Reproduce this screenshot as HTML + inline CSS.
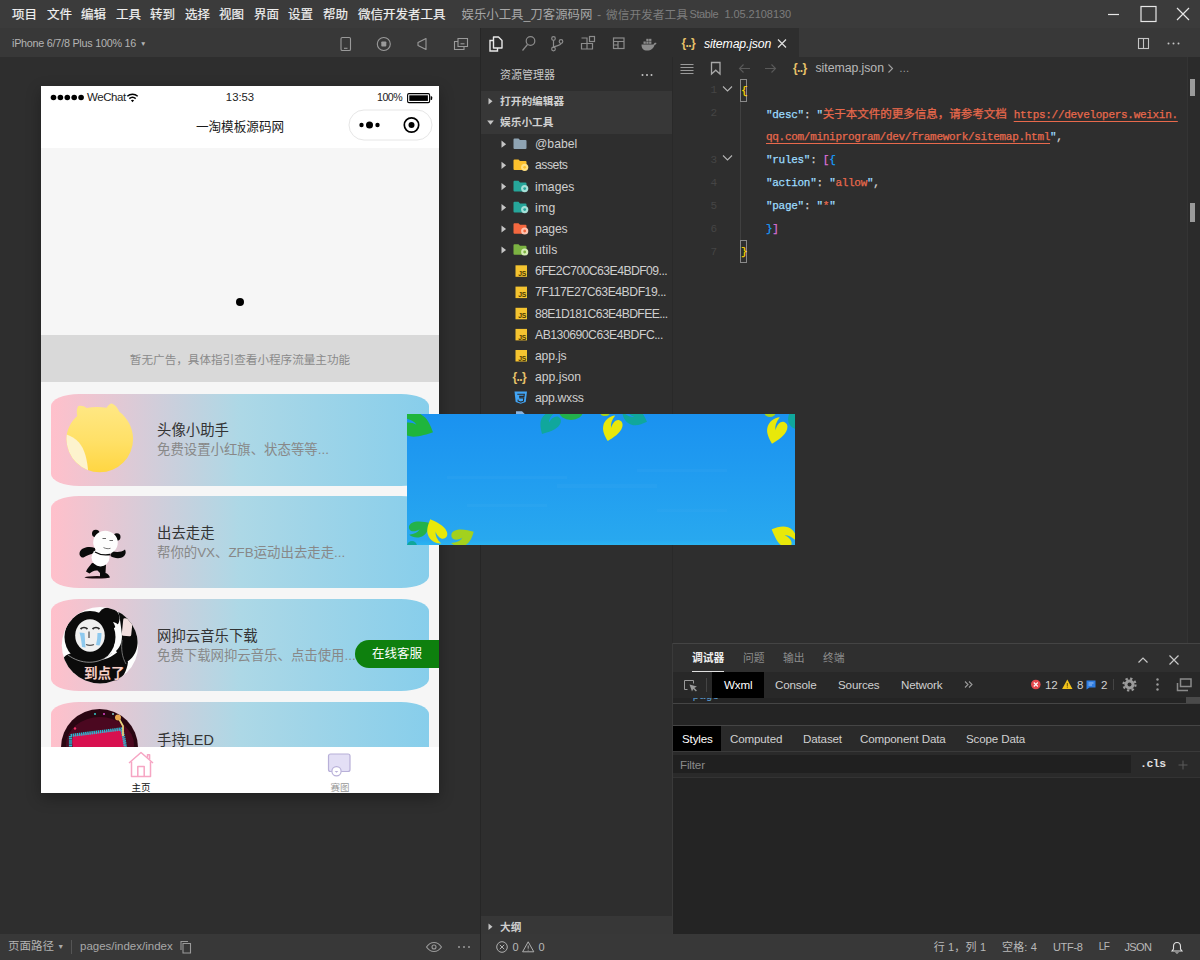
<!DOCTYPE html>
<html lang="zh-CN">
<head>
<meta charset="utf-8">
<title>微信开发者工具</title>
<style>
*{box-sizing:border-box;margin:0;padding:0}
html,body{width:1200px;height:960px;overflow:hidden;background:#2e2e2e}
body{font-family:"Liberation Sans","Noto Sans CJK SC",sans-serif;font-size:12px;color:#ccc;position:relative}
.abs{position:absolute}
.t{position:absolute;white-space:nowrap;line-height:1}
svg{position:absolute;overflow:visible}
/* panels */
#titlebar{left:0;top:0;width:1200px;height:28px;background:#3b3b3b}
#simbar{left:0;top:28px;width:480px;height:29px;background:#383838}
#simarea{left:0;top:57px;width:480px;height:877px;background:#2e2e2e}
#simfoot{left:0;top:934px;width:480px;height:26px;background:#383838}
#vsep{left:480px;top:28px;width:1px;height:932px;background:#262626}
#actbar{left:481px;top:28px;width:191px;height:29px;background:#2e2e2e}
#explorer{left:481px;top:57px;width:191px;height:877px;background:#2e2e2e}
#tabs{left:672px;top:28px;width:528px;height:29px;background:#383838}
#editor{left:672px;top:57px;width:528px;height:586px;background:#2e2e2e}
#debug{left:672px;top:643px;width:528px;height:291px;background:#2b2b2b}
#status{left:481px;top:934px;width:719px;height:26px;background:#383838}
/* phone */
#phone{left:41px;top:86px;width:398px;height:707px;background:#f6f6f6;overflow:hidden;box-shadow:0 5px 14px rgba(0,0,0,.3)}

.mi{top:8.5px;font-size:12.5px;color:#f0f0f0;-webkit-text-stroke:.2px}
.ttl{top:8.5px;font-size:12.5px;color:#7d7d7d}

.card{position:absolute;left:9.6px;width:378.2px;height:92px;border-radius:28px/12px;background:linear-gradient(to right,#ffc0cb,#add8e6,#87ceeb)}
.ct{left:116px;font-size:14.4px;color:#333}
.cs{left:116px;font-size:13.4px;color:#888}

.tr{margin-top:.7px;left:54px;font-size:12.2px;color:#cfcfcf}
.sec{font-size:10.7px;font-weight:bold;color:#d0d0d0}

.lnum{margin-top:1px;left:30px;width:15px;text-align:right;font-family:"Liberation Mono",monospace;font-size:11px;color:#454545}
.code{font-family:"Liberation Mono","Noto Sans CJK SC",monospace;font-size:11px;letter-spacing:-.29px;line-height:13px;margin-top:1px;-webkit-text-stroke:.25px}
.code .cjk{letter-spacing:0;font-size:11.5px}

.dt{font-size:11.6px;color:#d0d0d0;letter-spacing:-.15px}
.sb{top:7.5px;font-size:11px;color:#b8b8b8}

#banner{left:407px;top:414px;width:388px;height:131px;overflow:hidden}
</style>
</head>
<body>
<div id="titlebar" class="abs"><span class="t mi" style="left:12px">项目</span><span class="t mi" style="left:47px">文件</span><span class="t mi" style="left:81px">编辑</span><span class="t mi" style="left:116px">工具</span><span class="t mi" style="left:150px">转到</span><span class="t mi" style="left:185px">选择</span><span class="t mi" style="left:219px">视图</span><span class="t mi" style="left:254px">界面</span><span class="t mi" style="left:288px">设置</span><span class="t mi" style="left:323px">帮助</span><span class="t mi" style="left:358px">微信开发者工具</span><span class="t ttl" style="left:461.5px;color:#a8a8a8;font-size:12.4px">娱乐小工具_刀客源码网</span><span class="t ttl" style="left:597px">-</span><span class="t ttl" style="left:606px;font-size:11.7px">微信开发者工具</span><span class="t ttl" style="left:689.6px;font-size:11px;letter-spacing:-.45px;top:9px">Stable</span><span class="t ttl" style="left:724.4px;font-size:11px;letter-spacing:-.05px;top:9px">1.05.2108130</span><svg style="left:1100px;top:0" width="100" height="28" viewBox="0 0 100 28" fill="none" stroke="#e6e6e6" stroke-width="1.2">
<path d="M8 14.5H19"/><rect x="41" y="6.5" width="15" height="15"/><path d="M77 8L89 20M89 8L77 20"/></svg></div>
<div id="simbar" class="abs"><span class="t" style="left:12px;top:10px;font-size:10.8px;color:#b4b4b4;letter-spacing:-.25px">iPhone 6/7/8 Plus 100% 16<span style="font-size:6.5px;position:relative;top:-1px;margin-left:4px">▼</span></span>
<svg style="left:330px;top:0" width="150" height="29" viewBox="330 28 150 29" fill="none" stroke="#9a9a9a" stroke-width="1.1">
<rect x="341" y="37.5" width="9.5" height="13" rx="1.3"/><path d="M344 48.3h3.5"/>
<circle cx="383.8" cy="44" r="6.5"/><rect x="381.3" y="41.5" width="5" height="5" rx=".8" fill="#9a9a9a" stroke="none"/>
<path d="M418 42.5l8-4v11l-8-4z" stroke-linejoin="round"/>
<path d="M458 38.5h9.5v8h-9.5z"/><path d="M458 41.5h-3.5v8h9.5v-3"/><path d="M460.5 43.8h4"/>
</svg></div>
<div id="simarea" class="abs"></div>
<div id="simfoot" class="abs"><span class="t" style="left:8px;top:7px;font-size:11.5px;color:#b4b4b4">页面路径 <span style="font-size:7px;position:relative;top:-1.5px;color:#aaa">▼</span></span>
<div class="abs" style="left:71px;top:6px;width:1px;height:14px;background:#555"></div>
<span class="t" style="left:80px;top:7px;font-size:11.5px;color:#a8a8a8">pages/index/index</span>
<svg style="left:0;top:0" width="480" height="26" viewBox="0 934 480 26" fill="none" stroke="#9a9a9a" stroke-width="1.1">
<path d="M183 943.5h7.5v9.5h-7.5z"/><path d="M181 950v-8.5h7"/>
<path d="M426.5 947c2-3 4.5-4.5 7.5-4.5s5.5 1.5 7.5 4.5c-2 3-4.5 4.5-7.5 4.5s-5.5-1.5-7.5-4.5z"/><circle cx="434" cy="947" r="2"/>
<g fill="#9a9a9a" stroke="none"><circle cx="459" cy="947" r="1"/><circle cx="464" cy="947" r="1"/><circle cx="469" cy="947" r="1"/></g>
</svg></div>
<div id="actbar" class="abs"><svg style="left:0;top:0" width="191" height="29" viewBox="481 28 191 29" fill="none" stroke="#8c8c8c" stroke-width="1.2">
<g stroke="#e8e8e8" stroke-width="1.4"><path d="M493.5 37h5l3.5 3.5v7.5h-8.5z" stroke-linejoin="round"/><path d="M493.5 40.5h-3.5v10.5h7.5v-3"/></g>
<circle cx="530.5" cy="41" r="4.3"/><path d="M527.5 44.5l-5 6"/>
<circle cx="553.5" cy="38.5" r="1.8"/><circle cx="553.5" cy="49" r="1.8"/><circle cx="561" cy="41.5" r="1.8"/><path d="M553.5 40.3v7M561 43.3c0 3-7.5 2-7.5 4.5"/>
<path d="M581.5 43.5h5.5v5.5h-5.5zM587 43.5h5.5v5.5h-5.5z"/><path d="M581.5 38h5.5v5.5"/><rect x="589.5" y="36.5" width="5" height="5"/>
<rect x="613.5" y="38" width="10.5" height="10.5"/><path d="M613.5 41.5h10.5M618 41.5v3.5h-4.5M618 45v3.5"/>
<g fill="#8c8c8c" stroke="none"><path d="M641.5 44.5h12c.5-1.5 1.5-2 3-1.5c-.3 1-.8 1.8-2 2c-.8 3.5-3.5 5.5-7.5 5.5c-3.5 0-5.5-2-5.5-6z"/><rect x="643.5" y="41.5" width="2.3" height="2.3"/><rect x="646.3" y="41.5" width="2.3" height="2.3"/><rect x="649.1" y="41.5" width="2.3" height="2.3"/><rect x="646.3" y="38.8" width="2.3" height="2.3"/><rect x="649.1" y="38.8" width="2.3" height="2.3"/></g>
</svg></div>
<div id="explorer" class="abs"><div class="abs" style="left:0;top:34px;width:191px;height:43px;background:#373737"></div>
<div class="abs" style="left:0;top:859px;width:191px;height:18px;background:#373737"></div>
<svg style="left:0;top:0" width="191" height="877" viewBox="481 57 191 877"><path d="M501.5 140.6l4.6 3.6l-4.6 3.6z" fill="#c5c5c5"/><path d="M513.5 139.39999999999998a1 1 0 0 1 1-1h4l1.5 1.6h5.5a1 1 0 0 1 1 1v7a1 1 0 0 1-1 1h-11a1 1 0 0 1-1-1z" fill="#8fa4b3"/><path d="M501.5 161.70000000000002l4.6 3.6l-4.6 3.6z" fill="#c5c5c5"/><path d="M513.5 160.5a1 1 0 0 1 1-1h4l1.5 1.6h5.5a1 1 0 0 1 1 1v7a1 1 0 0 1-1 1h-11a1 1 0 0 1-1-1z" fill="#fbc02d"/><circle cx="524.7" cy="167.3" r="3.6" fill="#ffe082"/><circle cx="524.7" cy="167.3" r="1.4" fill="#fbc02d"/><path d="M501.5 183.0l4.6 3.6l-4.6 3.6z" fill="#c5c5c5"/><path d="M513.5 181.79999999999998a1 1 0 0 1 1-1h4l1.5 1.6h5.5a1 1 0 0 1 1 1v7a1 1 0 0 1-1 1h-11a1 1 0 0 1-1-1z" fill="#26a69a"/><circle cx="524.7" cy="188.6" r="3.6" fill="#a5e0d8"/><circle cx="524.7" cy="188.6" r="1.4" fill="#26a69a"/><path d="M501.5 204.0l4.6 3.6l-4.6 3.6z" fill="#c5c5c5"/><path d="M513.5 202.79999999999998a1 1 0 0 1 1-1h4l1.5 1.6h5.5a1 1 0 0 1 1 1v7a1 1 0 0 1-1 1h-11a1 1 0 0 1-1-1z" fill="#26a69a"/><circle cx="524.7" cy="209.6" r="3.6" fill="#a5e0d8"/><circle cx="524.7" cy="209.6" r="1.4" fill="#26a69a"/><path d="M501.5 225.4l4.6 3.6l-4.6 3.6z" fill="#c5c5c5"/><path d="M513.5 224.2a1 1 0 0 1 1-1h4l1.5 1.6h5.5a1 1 0 0 1 1 1v7a1 1 0 0 1-1 1h-11a1 1 0 0 1-1-1z" fill="#f4683f"/><circle cx="524.7" cy="231" r="3.6" fill="#ffc4b0"/><circle cx="524.7" cy="231" r="1.4" fill="#f4683f"/><path d="M501.5 246.4l4.6 3.6l-4.6 3.6z" fill="#c5c5c5"/><path d="M513.5 245.2a1 1 0 0 1 1-1h4l1.5 1.6h5.5a1 1 0 0 1 1 1v7a1 1 0 0 1-1 1h-11a1 1 0 0 1-1-1z" fill="#7cb342"/><circle cx="524.7" cy="252" r="3.6" fill="#d4ecb4"/><circle cx="524.7" cy="252" r="1.4" fill="#7cb342"/><rect x="515.5" y="265.3" width="11.5" height="11.5" fill="#f4c430"/><text x="518.2" y="275.9" font-size="6.8" font-weight="bold" fill="#4a3800" font-family="Liberation Sans,sans-serif" letter-spacing="-.3">JS</text><rect x="515.5" y="286.6" width="11.5" height="11.5" fill="#f4c430"/><text x="518.2" y="297.2" font-size="6.8" font-weight="bold" fill="#4a3800" font-family="Liberation Sans,sans-serif" letter-spacing="-.3">JS</text><rect x="515.5" y="307.8" width="11.5" height="11.5" fill="#f4c430"/><text x="518.2" y="318.4" font-size="6.8" font-weight="bold" fill="#4a3800" font-family="Liberation Sans,sans-serif" letter-spacing="-.3">JS</text><rect x="515.5" y="328.90000000000003" width="11.5" height="11.5" fill="#f4c430"/><text x="518.2" y="339.5" font-size="6.8" font-weight="bold" fill="#4a3800" font-family="Liberation Sans,sans-serif" letter-spacing="-.3">JS</text><rect x="515.5" y="350.0" width="11.5" height="11.5" fill="#f4c430"/><text x="518.2" y="360.6" font-size="6.8" font-weight="bold" fill="#4a3800" font-family="Liberation Sans,sans-serif" letter-spacing="-.3">JS</text><text x="512.5" y="381" font-size="12" font-weight="bold" fill="#e8c36a" font-family="Liberation Sans,sans-serif" letter-spacing="-.6">{..}</text><path d="M514.5 391.5h12.5l-1.3 10.5l-5 1.8l-5-1.8z" fill="#42a5f5"/><path d="M517.3 394.2h7l-.3 2.2h-4.3l.2 1.5h3.900l-.4 3.3l-2.600 .9l-2.600-.9l-.2-1.600" fill="none" stroke="#2b2b2b" stroke-width="1.1"/><path d="M516 411.3h6l2.5 2.5v4h-8.5z" fill="#8ab4e0"/><g fill="#c5c5c5"><circle cx="642.5" cy="75" r="1"/><circle cx="647" cy="75" r="1"/><circle cx="651.5" cy="75" r="1"/></g><path d="M488.5 98l4 3.2l-4 3.2z" fill="#c5c5c5"/><path d="M487.2 120.5h6.600l-3.300 4.2z" fill="#c5c5c5"/><path d="M488.5 923.5l4 3.2l-4 3.2z" fill="#c5c5c5"/></svg>
<span class="t" style="left:19px;top:12.5px;font-size:11px;color:#c8c8c8">资源管理器</span>
<span class="t sec" style="left:19px;top:39px">打开的编辑器</span>
<span class="t sec" style="left:19px;top:60px">娱乐小工具</span>
<span class="t sec" style="left:19px;top:864.5px">大纲</span>
<span class="t tr" style="top:80.7px">@babel</span><span class="t tr" style="top:101.8px;letter-spacing:-0.46px">assets</span><span class="t tr" style="top:123.1px">images</span><span class="t tr" style="top:144.1px;letter-spacing:0.29px">img</span><span class="t tr" style="top:165.5px;letter-spacing:-0.14px">pages</span><span class="t tr" style="top:186.5px;letter-spacing:0.16px">utils</span><span class="t tr" style="top:207.5px;letter-spacing:-0.55px">6FE2C700C63E4BDF09...</span><span class="t tr" style="top:228.8px;letter-spacing:-0.46px">7F117E27C63E4BDF19...</span><span class="t tr" style="top:250.0px;letter-spacing:-0.63px">88E1D181C63E4BDFEE...</span><span class="t tr" style="top:271.1px;letter-spacing:-0.48px">AB130690C63E4BDFC...</span><span class="t tr" style="top:292.2px;letter-spacing:-0.17px">app.js</span><span class="t tr" style="top:313.5px">app.json</span><span class="t tr" style="top:334.5px;letter-spacing:-0.29px">app.wxss</span></div>
<div id="tabs" class="abs"><div class="abs" style="left:0;top:0;width:127px;height:29px;background:#2e2e2e"></div>
<span class="t" style="left:9.5px;top:9px;font-size:12px;font-weight:bold;color:#e8c36a;letter-spacing:-.6px">{..}</span>
<span class="t" style="left:32px;top:9.5px;font-size:12.3px;font-style:italic;color:#fff;letter-spacing:-.15px">sitemap.json</span>
<svg style="left:0;top:0" width="528" height="29" viewBox="672 28 528 29" fill="none" stroke="#e0e0e0" stroke-width="1.2">
<path d="M778 39.5l8 8M786 39.5l-8 8"/>
<g stroke="#c5c5c5" stroke-width="1.1"><rect x="1138.5" y="38.5" width="10" height="10"/><path d="M1143.5 38.5v10"/></g>
<g fill="#c5c5c5" stroke="none"><circle cx="1168.5" cy="43.5" r="1"/><circle cx="1173.5" cy="43.5" r="1"/><circle cx="1178.5" cy="43.5" r="1"/></g>
</svg></div>
<div id="editor" class="abs"><svg style="left:0;top:0" width="528" height="586" viewBox="672 57 528 586" fill="none" stroke="#c5c5c5" stroke-width="1.1">
<path d="M680.5 64.5h13M680.5 67.5h13M680.5 70.5h13M680.5 73.5h13" stroke-width="1" stroke="#9a9a9a"/>
<path d="M711.5 62.5h8.5v11.5l-4.250-3.800l-4.250 3.800z" stroke-width="1.3" stroke="#a8a8a8"/>
<g stroke="#5a5a5a"><path d="M750 68.5h-10.5M743.5 64.5l-4 4l4 4"/><path d="M765 68.5h10.5M771.5 64.5l4 4l-4 4"/></g>
<path d="M888.5 64.5l4 4l-4 4" stroke="#a0a0a0"/>
<g stroke="#b4b4b4" stroke-width="1.1"><path d="M723 86.5l4.5 4.5l4.5-4.5"/><path d="M723 155.5l4.5 4.5l4.5-4.5"/></g>
<rect x="740.5" y="79.5" width="6" height="22" stroke="#8a8a8a" stroke-width="1"/><rect x="740.5" y="240.5" width="6" height="22" stroke="#8a8a8a" stroke-width="1"/>
<path d="M740.5 102v138" stroke="#404040" stroke-width="1"/>
</svg>
<div class="abs" style="left:515px;top:0;width:13px;height:586px;background:#2b2b2b;border-left:1px solid #343434"></div>
<div class="abs" style="left:518px;top:22px;width:5px;height:17px;background:#9a9a9a"></div>
<div class="abs" style="left:518px;top:146px;width:5px;height:19px;background:#9a9a9a"></div>
<span class="t" style="left:121px;top:4.5px;font-size:12px;font-weight:bold;color:#e8c36a;letter-spacing:-.6px">{..}</span>
<span class="t" style="left:143.5px;top:5px;font-size:12.3px;color:#b8b8b8;letter-spacing:-.05px">sitemap.json</span>
<span class="t" style="left:227px;top:5.5px;font-size:10.5px;color:#a0a0a0;letter-spacing:-1px">…</span>
<span class="t lnum" style="top:27px">1</span><span class="t lnum" style="top:50px">2</span><span class="t lnum" style="top:96.5px">3</span><span class="t lnum" style="top:119.5px">4</span><span class="t lnum" style="top:142.5px">5</span><span class="t lnum" style="top:165.5px">6</span><span class="t lnum" style="top:188.5px">7</span><span class="t code" style="left:69px;top:26.5px"><span style="color:#ffd700">{</span></span><span class="t code" style="left:94px;top:49.5px"><span style="color:#9cdcfe">"desc"</span><span style="color:#d4d4d4">: </span><span style="color:#9cdcfe">"</span><span style="color:#e8694c" class="cjk">关于本文件的更多信息，请参考文档 </span><span style="color:#e8694c;text-decoration:underline;text-underline-offset:3px">https://developers.weixin.</span></span><span class="t code" style="left:94px;top:73.0px"><span style="color:#e8694c;text-decoration:underline;text-underline-offset:3px">qq.com/miniprogram/dev/framework/sitemap.html</span><span style="color:#9cdcfe">"</span><span style="color:#d4d4d4">,</span></span><span class="t code" style="left:94px;top:96.0px"><span style="color:#9cdcfe">"rules"</span><span style="color:#d4d4d4">: </span><span style="color:#da70d6">[</span><span style="color:#179fff">{</span></span><span class="t code" style="left:94px;top:119.0px"><span style="color:#9cdcfe">"action"</span><span style="color:#d4d4d4">: </span><span style="color:#9cdcfe">"</span><span style="color:#e8694c">allow</span><span style="color:#9cdcfe">"</span><span style="color:#d4d4d4">,</span></span><span class="t code" style="left:94px;top:142.0px"><span style="color:#9cdcfe">"page"</span><span style="color:#d4d4d4">: </span><span style="color:#9cdcfe">"</span><span style="color:#e8694c">*</span><span style="color:#9cdcfe">"</span></span><span class="t code" style="left:94px;top:165.0px"><span style="color:#179fff">}</span><span style="color:#da70d6">]</span></span><span class="t code" style="left:69px;top:188.0px"><span style="color:#ffd700">}</span></span></div>
<div id="debug" class="abs"><div class="abs" style="left:0;top:0;width:528px;height:1px;background:#444"></div>
<div class="abs" style="left:0;top:1px;width:528px;height:28px;background:#2f2f2f"></div>
<div class="abs" style="left:0;top:29px;width:528px;height:26px;background:#282828"></div>
<div class="abs" style="left:0;top:55px;width:528px;height:236px;background:#242424"></div>
<div class="abs" style="left:0;top:60px;width:528px;height:1px;background:#454545"></div>
<div class="abs" style="left:0;top:82px;width:528px;height:1px;background:#454545"></div>
<div class="abs" style="left:0;top:83px;width:528px;height:25px;background:#2a2a2a"></div>
<div class="abs" style="left:0;top:108px;width:528px;height:1px;background:#3a3a3a"></div>
<div class="abs" style="left:0;top:109px;width:528px;height:25px;background:#2a2a2a"></div>
<div class="abs" style="left:0;top:112px;width:459px;height:18px;background:#202020"></div>
<div class="abs" style="left:0;top:134px;width:528px;height:1px;background:#333"></div>
<div class="abs" style="left:0;top:0;width:1px;height:291px;background:#3a3a3a"></div>
<div class="abs" style="left:40px;top:29px;width:52px;height:26px;background:#000"></div>
<div class="abs" style="left:1px;top:83px;width:48px;height:25px;background:#000"></div>
<div class="abs" style="left:20px;top:28px;width:32px;height:1px;background:#e0e0e0"></div>
<div class="abs" style="left:514px;top:54px;width:14px;height:6px;background:#4a4a4a"></div>
<span class="t" style="left:20px;top:10px;font-size:10.8px;font-weight:bold;color:#eee">调试器</span>
<span class="t" style="left:71px;top:10px;font-size:10.8px;color:#8c8c8c">问题</span>
<span class="t" style="left:111px;top:10px;font-size:10.8px;color:#8c8c8c">输出</span>
<span class="t" style="left:151px;top:10px;font-size:10.8px;color:#8c8c8c">终端</span>
<span class="t dt" style="left:52px;top:36px;color:#fff">Wxml</span>
<span class="t dt" style="left:103px;top:36px">Console</span>
<span class="t dt" style="left:166px;top:36px">Sources</span>
<span class="t dt" style="left:229px;top:36px">Network</span>
<span class="t dt" style="left:373px;top:36px">12</span>
<span class="t dt" style="left:405px;top:36px">8</span>
<span class="t dt" style="left:429px;top:36px">2</span>
<span class="t dt" style="left:10px;top:90px;color:#fff">Styles</span>
<span class="t dt" style="left:58px;top:90px">Computed</span>
<span class="t dt" style="left:131px;top:90px">Dataset</span>
<span class="t dt" style="left:188px;top:90px">Component Data</span>
<span class="t dt" style="left:294px;top:90px">Scope Data</span>
<span class="t dt" style="left:8px;top:116px;color:#8a8a8a">Filter</span>
<span class="t" style="left:468px;top:115px;font-size:11.5px;font-weight:bold;color:#e0e0e0;font-family:'Liberation Mono',monospace;letter-spacing:-.5px">.cls</span>
<div class="abs" style="left:14px;top:55px;width:60px;height:5px;overflow:hidden"><span class="t" style="left:0;top:-7px;font-size:11px;color:#5b9bd0;font-family:'Liberation Mono',monospace">&lt;page&gt;</span></div>
<svg style="left:0;top:0" width="528" height="291" viewBox="672 643 528 291" fill="none" stroke="#c8c8c8" stroke-width="1.2">
<path d="M1138.5 662.5l4.5-4.5l4.5 4.5"/><path d="M1169.5 655.5l9 9M1178.5 655.5l-9 9"/>
<g stroke="#9a9a9a" stroke-width="1"><path d="M684.5 680.5h9v3M684.5 680.5v9h3"/><path d="M689.5 684.5l2.5 7l1.3-2.600l2.600 2.600l1-1l-2.600-2.600l2.600-1.3z" fill="#9a9a9a" stroke="none"/></g>
<path d="M706.5 678v14" stroke="#444" stroke-width="1"/>
<g stroke="#9a9a9a" stroke-width="1.1"><path d="M965 681.5l3 3l-3 3M969 681.5l3 3l-3 3"/></g>
<circle cx="1035.8" cy="684.5" r="4.8" fill="#e5484d" stroke="none"/><path d="M1033.8 682.5l4 4M1037.8 682.5l-4 4" stroke="#fff" stroke-width="1.1"/>
<path d="M1067.3 679.5l5.2 9.5h-10.400z" fill="#f1c21b" stroke="none"/><path d="M1067.3 683v3.5M1067.3 687.3v.8" stroke="#6b5200" stroke-width="1"/>
<path d="M1086.5 680.5h9v7h-6l-3 2z" fill="#2f7de1" stroke="none"/><path d="M1088.5 683h5M1088.5 685h3.5" stroke="#cfe3ff" stroke-width=".7"/>
<path d="M1113.5 679v11" stroke="#444" stroke-width="1"/>
<g fill="#9a9a9a" stroke="none"><circle cx="1129.5" cy="684.5" r="5"/><circle cx="1157.5" cy="679.5" r="1.2"/><circle cx="1157.5" cy="684.5" r="1.2"/><circle cx="1157.5" cy="689.5" r="1.2"/></g>
<circle cx="1129.5" cy="684.5" r="6" stroke="#9a9a9a" stroke-width="2.2" stroke-dasharray="2.3 2.400"/><circle cx="1129.5" cy="684.5" r="2" fill="#282828" stroke="none"/>
<g stroke="#8a8a8a" stroke-width="1.5"><rect x="1180.5" y="679" width="10.5" height="7.5"/><path d="M1177.5 683v7.5h10.5"/></g>
<path d="M1183 760.5v9M1178.5 765h9" stroke="#5a5a5a" stroke-width="1"/>
</svg></div>
<div id="status" class="abs"><svg style="left:0;top:0" width="719" height="26" viewBox="481 934 719 26" fill="none" stroke="#b0b0b0" stroke-width="1">
<circle cx="502" cy="947" r="5.3"/><path d="M499.8 944.8l4.4 4.4M504.2 944.8l-4.4 4.4"/>
<path d="M528.2 941.8l5.6 10h-11.2z"/><path d="M528.2 945.5v3.2M528.2 949.8v.7"/>
<path d="M1177 942.5c-2.5 0-3.5 2-3.5 4v2.5l-1.5 2h10l-1.5-2v-2.5c0-2-1-4-3.5-4z" stroke="#e0e0e0" stroke-width="1.1"/><path d="M1175.8 952.3c.3 1.200 2.1 1.200 2.400 0" stroke="#e0e0e0"/>
</svg>
<span class="t sb" style="left:31.4px;letter-spacing:-.4px">0</span><span class="t sb" style="left:57.4px;letter-spacing:-.4px">0</span>
<span class="t sb" style="left:452.7px;letter-spacing:.16px">行 1，列 1</span>
<span class="t sb" style="left:521px;letter-spacing:.15px">空格: 4</span>
<span class="t sb" style="left:572px;letter-spacing:-.33px">UTF-8</span>
<span class="t sb" style="left:617.7px;font-size:10px;letter-spacing:-.4px">LF</span>
<span class="t sb" style="left:643.5px;letter-spacing:-.65px">JSON</span></div>
<div id="vsep" class="abs"></div><div class="abs" style="left:672px;top:57px;width:1px;height:586px;background:#292929"></div>
<div id="phone" class="abs">
<div class="abs" style="left:0;top:0;width:398px;height:62px;background:#fff"></div>
<svg style="left:0;top:0" width="398" height="62" viewBox="0 0 398 62">
<g fill="#000"><circle cx="12.5" cy="11.5" r="2.8"/><circle cx="19.4" cy="11.5" r="2.8"/><circle cx="26.3" cy="11.5" r="2.8"/><circle cx="33.2" cy="11.5" r="2.8"/><circle cx="40.1" cy="11.5" r="2.8"/></g>
<g fill="none" stroke="#000" stroke-width="1.5" stroke-linecap="butt"><path d="M86.3 10.2a8 8 0 0 1 10.4 0"/><path d="M88.3 12.6a5 5 0 0 1 6.4 0"/></g><path d="M89.9 14.3a2.6 2.6 0 0 1 3.2 0L91.5 16.2z" fill="#000"/>
<rect x="366.6" y="7.6" width="22" height="9" rx="1.3" fill="none" stroke="#000" stroke-width="1.1"/><rect x="368.3" y="9.3" width="18.6" height="5.6" fill="#000"/><path d="M389.6 10.3h.6a1 1 0 0 1 1 1v1.6a1 1 0 0 1-1 1h-.6z" fill="#000"/>
<rect x="308" y="24" width="83" height="30" rx="15" fill="#fff" stroke="#e6e6e6" stroke-width="1"/>
<g fill="#000"><circle cx="320.5" cy="39" r="2.2"/><circle cx="328.5" cy="39" r="3.5"/><circle cx="336.5" cy="39" r="2.2"/><circle cx="370.5" cy="39" r="3"/></g>
<circle cx="370.5" cy="39" r="7.2" fill="none" stroke="#000" stroke-width="1.7"/>
</svg>
<span class="t" style="left:46px;top:5.6px;font-size:11.5px;color:#222;letter-spacing:-.45px">WeChat</span>
<span class="t" style="left:169px;width:60px;text-align:center;top:5.5px;font-size:11.3px;color:#222">13:53</span>
<span class="t" style="left:336px;top:6px;font-size:10.6px;color:#222;letter-spacing:-.5px">100%</span>
<span class="t" style="left:99px;width:200px;text-align:center;top:35px;font-size:12.6px;color:#1a1a1a">一淘模板源码网</span>
<div class="abs" style="left:0;top:62px;width:398px;height:187px;background:#f6f6f6"></div>
<div class="abs" style="left:195px;top:212px;width:8px;height:8px;border-radius:50%;background:#000"></div>
<div class="abs" style="left:0;top:249px;width:398px;height:47px;background:#d9d9d9"></div>
<span class="t" style="left:0;width:398px;text-align:center;top:268px;font-size:11.6px;color:#8a8a8a">暂无广告，具体指引查看小程序流量主功能</span>

<div class="card" style="top:308px"></div>
<div class="card" style="top:410px"></div>
<div class="card" style="top:513px"></div>
<div class="card" style="top:616px"></div>
<span class="t ct" style="top:337px">头像小助手</span>
<span class="t cs" style="top:357px">免费设置小红旗、状态等等...</span>
<span class="t ct" style="top:440px">出去走走</span>
<span class="t cs" style="top:460px">帮你的VX、ZFB运动出去走走...</span>
<span class="t ct" style="top:543px">网抑云音乐下载</span>
<span class="t cs" style="top:563px">免费下载网抑云音乐、点击使用...</span>
<span class="t ct" style="top:647px">手持LED</span>

<svg style="left:0;top:0" width="398" height="707" viewBox="41 86 398 707">
<defs>
<linearGradient id="yg" x1="0" y1="0" x2="0" y2="1"><stop offset="0" stop-color="#ffe98a"/><stop offset=".55" stop-color="#ffe066"/><stop offset="1" stop-color="#ffd43b"/></linearGradient>
<clipPath id="c1"><path d="M66.5 439a33.3 33.3 0 1 0 66.6 0c0-11-5.5-21-14-27.5c-1.5-4-4.5-7.5-8-8c-2 .8-3.5 2.5-4.5 4.3c-6.5-1.3-13.5-1.2-20 .2c-2.5-1.8-5.5-2.7-8.5-1.8c-1.5 3-1.7 6.5-.8 9.8C70.5 422 66.5 430 66.5 439z"/></clipPath>
<clipPath id="c3"><circle cx="100" cy="645.3" r="38.2"/></clipPath>
<clipPath id="c4"><circle cx="99.5" cy="747.5" r="38.5"/></clipPath>
</defs>
<!-- avatar 1 -->
<g clip-path="url(#c1)"><rect x="60" y="398" width="80" height="80" fill="url(#yg)"/>
<path d="M60 433c7 1 14 4 19 9.5c6 7 8.5 18 9.5 33H60z" fill="#fdf3cd"/></g>
<!-- avatar 2 panda -->
<g>
<ellipse cx="97" cy="577.3" rx="12.5" ry="1.3" fill="#1a0a0e"/>
<path d="M80 551.5c2-4 9-5.5 15-3.5l1 5c-5 .5-9 2.5-12.5 4.5c-3 .5-5-3-3.5-6z" fill="#0a0a0a"/>
<path d="M112 551c4 1.5 9 1.5 13-1.5c1.5 3 .5 6.5-3 8c-4 1.5-8.5 .5-11.5-1.5z" fill="#0a0a0a"/>
<path d="M92 563c-2 3-4.5 5-6 8.5l3.5 2c2-2 5-3.5 8-3l2.5 2.5v4.5h10c-1-2.5-2.5-4-4.5-4.5l.5-8.5z" fill="#0a0a0a"/>
<ellipse cx="100.5" cy="557.5" rx="9" ry="9" fill="#fff"/>
<circle cx="95.8" cy="533.5" r="3.8" fill="#0a0a0a"/><circle cx="116.8" cy="537" r="3.7" fill="#0a0a0a"/>
<ellipse cx="105.5" cy="542.5" rx="12.3" ry="11.8" fill="#fdfdfd" transform="rotate(10 105.5 542.5)"/>
<path d="M102.5 538.5h3.5M109.5 540.5h3.5" stroke="#666" stroke-width="1.2" fill="none"/>
<path d="M103.5 547.5c2 1.2 5 1.5 7 .8" stroke="#777" stroke-width="1" fill="none"/>
<path d="M95 552c4 2.5 10 3.5 15.5 2.5" stroke="#0a0a0a" stroke-width="1.3" fill="none"/>
</g>
<!-- avatar 3 -->
<g clip-path="url(#c3)"><rect x="60" y="605" width="80" height="80" fill="#fdfdfd"/>
<ellipse cx="90" cy="637" rx="25.5" ry="26" fill="#0b0b0b"/>
<circle cx="108.5" cy="618.5" r="11" fill="#0b0b0b"/>
<path d="M118 611c8-1 16 8 19 22c2 12 0 24-12 30l-9-12c5-4 7-12 5.5-20c-1-7-1.5-14-3.5-20z" fill="#0b0b0b"/>
<path d="M60 664c4-9 9-12 15-10c12 9 30 10 45-4l8 12c-1 9-6 17-12 23H66z" fill="#0b0b0b"/>
<path d="M113 622c4 6 5 16 1 24c4-2 7-8 7-14c0-5-3-9-8-10z" fill="#fdfdfd"/>
<rect x="122.5" y="618.5" width="9.5" height="17.5" rx="1.5" fill="#f1dede" transform="rotate(6 127 627)"/>
<ellipse cx="90" cy="635.5" rx="14.8" ry="16.2" fill="#f0f0f0"/>
<path d="M80.5 629c2-1.8 5-1.8 7 0M92.5 629c2-1.8 5-1.8 7 0" stroke="#2a2a2a" stroke-width="1.8" fill="none"/>
<path d="M79.5 632.5c1.5 5 2 10 2.5 14.5l3.5 .5c-.5-5-.5-9.5-1-14.5zM97.5 633c0 4-.5 8-1.5 12l3.5 .5c1.5-4 2-8 2-12.5z" fill="#8ec9ee"/>
<path d="M89 631.5v6.5M86 644.5c2.5 1 5.5 1 8 0" stroke="#555" stroke-width="1.300" fill="none"/>
<path d="M68 655c12 9 30 11 44 -2" stroke="#bbb" stroke-width=".7" fill="none"/>
<path d="M122 640c-1 9 0 17 4 24" stroke="#999" stroke-width=".7" fill="none"/>
</g>
<text x="84" y="677.5" font-size="13.5" font-weight="bold" fill="#f6cfc6" stroke="#3a1a1a" stroke-width=".4" paint-order="stroke" font-family="'Liberation Sans','Noto Sans CJK SC',sans-serif">到点了</text>
<!-- avatar 4 -->
<g clip-path="url(#c4)"><rect x="60" y="708" width="80" height="40" fill="#2a0612"/>
<ellipse cx="100" cy="745" rx="34" ry="28" fill="#5a0a26" opacity=".7"/>
<path d="M73 748c-1-4-1-9 0-13l48-6c3 6 4 12 5 19z" fill="#d8104f"/>
<path d="M70.5 748v-12.5l51-6.5c2 6 3 12 4 19" stroke="#2bb6cf" stroke-width="3.2" stroke-dasharray="1.5 .6" fill="none"/>
<path d="M118 717l5 9v10" stroke="#e6d07a" stroke-width="1.8" fill="none"/><circle cx="118" cy="717.5" r="3" fill="#e8a64e"/>
<circle cx="95" cy="714" r="1" fill="#3cc"/><circle cx="104" cy="714" r="1" fill="#d4c"/><circle cx="113" cy="714" r="1" fill="#8cc"/><circle cx="75" cy="728.5" r="1.2" fill="#e36"/>
</g>
</svg>

<div class="abs" style="left:314px;top:554px;width:90px;height:28px;border-radius:14px 0 0 14px;background:#0e800e"></div>
<span class="t" style="left:331px;top:561.5px;font-size:12.5px;color:#fff">在线客服</span>
<div class="abs" style="left:0;top:661px;width:398px;height:46px;background:#fff"></div>
<svg style="left:0;top:661px" width="398" height="46" viewBox="0 0 398 46">
<g fill="none" stroke="#f6a5c3" stroke-width="1.5" stroke-linejoin="round"><path d="M88 16L100 5.5L112 16"/><path d="M90.5 14.5V29.5H109.5V14.5"/><path d="M96.8 29.5V19.5H103.2V29.5"/><path d="M106.5 10.8V7.8H108.6V12.6"/></g>
<rect x="287.5" y="7" width="21.5" height="17.5" rx="2" fill="#e3dff5" stroke="#b8b0d8" stroke-width="1.2"/>
<circle cx="295.5" cy="24.3" r="4.6" fill="#fff" stroke="#b8b0d8" stroke-width="1.2"/><path d="M293.6 24h3.8l-1.9 1.8z" fill="#b8b0d8"/>
</svg>
<span class="t" style="left:70px;width:60px;text-align:center;top:697px;font-size:9.5px;color:#111">主页</span>
<span class="t" style="left:269px;width:60px;text-align:center;top:697px;font-size:9.5px;color:#999">赛图</span>
</div>
<div id="banner" class="abs"><svg style="left:0;top:0" width="388" height="131" viewBox="0 0 388 131">
<defs><linearGradient id="bg1" x1="0" y1="0" x2="0" y2="1"><stop offset="0" stop-color="#1a92f0"/><stop offset=".5" stop-color="#219df0"/><stop offset=".96" stop-color="#28a8ef"/><stop offset="1" stop-color="#2ab4f2"/></linearGradient></defs>
<rect width="388" height="131" fill="url(#bg1)"/>
<g fill="#fff" opacity=".02"><rect x="40" y="62" width="120" height="3"/><rect x="150" y="70" width="100" height="4"/><rect x="230" y="55" width="90" height="3"/><rect x="60" y="90" width="80" height="3"/><rect x="250" y="95" width="70" height="3"/></g>
<path d="M0 0C-3-5-5.5-10-4.5-15C-3.5-21 2-25 7.5-25.5C4-21 2.5-17 3.5-13C4.5-18 8-21.5 11-21C14.5-20 15.5-17 14.5-14C13-8 5-3 0 0z" fill="#1fb53c" transform="translate(26 18.3) rotate(-50) scale(-1.35 1.35)"/><path d="M0 0C-3-5-5.5-10-4.5-15C-3.5-21 2-25 7.5-25.5C4-21 2.5-17 3.5-13C4.5-18 8-21.5 11-21C14.5-20 15.5-17 14.5-14C13-8 5-3 0 0z" fill="#10a79c" transform="translate(135 20) rotate(16) scale(1.0)"/><ellipse cx="164" cy="-2.5" rx="12" ry="8.5" fill="#22b14c"/><ellipse cx="198" cy="-1" rx="4.5" ry="3" fill="#a3d11e"/><path d="M0 0C-3-5-5.5-10-4.5-15C-3.5-21 2-25 7.5-25.5C4-21 2.5-17 3.5-13C4.5-18 8-21.5 11-21C14.5-20 15.5-17 14.5-14C13-8 5-3 0 0z" fill="#e8e80a" transform="translate(200.75 27) rotate(0) scale(1.0)"/><path d="M0 0C-3-5-5.5-10-4.5-15C-3.5-21 2-25 7.5-25.5C4-21 2.5-17 3.5-13C4.5-18 8-21.5 11-21C14.5-20 15.5-17 14.5-14C13-8 5-3 0 0z" fill="#10a79c" transform="translate(240 7.75) rotate(-84) scale(1.0)"/><path d="M0 0C-3-5-5.5-10-4.5-15C-3.5-21 2-25 7.5-25.5C4-21 2.5-17 3.5-13C4.5-18 8-21.5 11-21C14.5-20 15.5-17 14.5-14C13-8 5-3 0 0z" fill="#24b24a" transform="translate(23 109) rotate(-136) scale(0.9)"/><path d="M0 0C-3-5-5.5-10-4.5-15C-3.5-21 2-25 7.5-25.5C4-21 2.5-17 3.5-13C4.5-18 8-21.5 11-21C14.5-20 15.5-17 14.5-14C13-8 5-3 0 0z" fill="#e8e80a" transform="translate(23.3 105.3) rotate(172) scale(-1 1)"/><path d="M0 0C-3-5-5.5-10-4.5-15C-3.5-21 2-25 7.5-25.5C4-21 2.5-17 3.5-13C4.5-18 8-21.5 11-21C14.5-20 15.5-17 14.5-14C13-8 5-3 0 0z" fill="#a3d11e" transform="translate(66.7 117.8) rotate(-133) scale(0.95)"/><ellipse cx="5" cy="132" rx="5" ry="5" fill="#10a79c"/><path d="M0 0C-3-5-5.5-10-4.5-15C-3.5-21 2-25 7.5-25.5C4-21 2.5-17 3.5-13C4.5-18 8-21.5 11-21C14.5-20 15.5-17 14.5-14C13-8 5-3 0 0z" fill="#e8e80a" transform="translate(365 29.7) rotate(0) scale(1.04)"/><ellipse cx="363" cy="-1" rx="5.5" ry="4" fill="#a3d11e"/><ellipse cx="390" cy="5" rx="9" ry="10" fill="#10a79c"/><path d="M0 0C-3-5-5.5-10-4.5-15C-3.5-21 2-25 7.5-25.5C4-21 2.5-17 3.5-13C4.5-18 8-21.5 11-21C14.5-20 15.5-17 14.5-14C13-8 5-3 0 0z" fill="#e8e80a" transform="translate(364.7 115.2) rotate(100) scale(1.05)"/>
</svg></div>
</body>
</html>
